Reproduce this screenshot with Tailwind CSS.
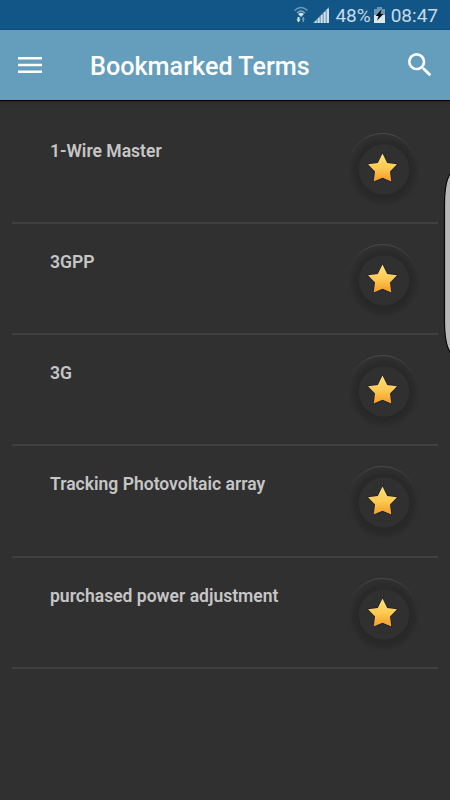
<!DOCTYPE html>
<html lang="en">
<head>
<meta charset="utf-8">
<title>Bookmarked Terms</title>
<script src="https://cdn.jsdelivr.net/npm/@tailwindcss/browser@4"></script>
</head>
<body class="relative h-[800px] w-[450px] overflow-hidden bg-[#303030] font-[Roboto,sans-serif]">
<svg class="absolute h-0 w-0">
  <defs>
    <linearGradient id="gold" x1="0" y1="0" x2="0" y2="1"><stop offset="0" stop-color="#ffe27a"/><stop offset=".5" stop-color="#fdca55"/><stop offset="1" stop-color="#f79a27"/></linearGradient>
    <linearGradient id="rim" x1="0" y1="0" x2="0" y2="1"><stop offset="0" stop-color="#4a4a4a"/><stop offset=".45" stop-color="#303030" stop-opacity="0"/></linearGradient>
    <radialGradient id="shade"><stop offset="0" stop-color="#262626"/><stop offset=".65" stop-color="#272727"/><stop offset=".82" stop-color="#2b2b2b"/><stop offset="1" stop-color="#303030" stop-opacity="0"/></radialGradient>
    <symbol id="star" viewBox="0 0 90 90">
      <circle cx="44" cy="46" r="38" fill="url(#shade)"/>
      <circle cx="42.5" cy="42.5" r="34" fill="none" stroke="url(#rim)"/>
      <circle cx="44" cy="44.5" r="25.2" fill="#303030"/>
      <path d="M42.500 28.500 L47.200 38 L57 39.300 L50 46.600 L51.300 56.500 L42.500 52.800 L33.700 56.500 L35 46.600 L28 39.300 L37.800 38 Z" fill="url(#gold)" stroke="#1b2030" stroke-width="1.400" stroke-linejoin="round" paint-order="stroke"/>
    </symbol>
  </defs>
</svg>

<div class="flex h-[30px] items-center justify-end border-b border-[#0d4c7c] bg-[#115687] pr-[12px] text-[#c9d9e8]">
  <svg class="mr-[5px] h-[17px] w-[14px]" viewBox="0 0 14 17" fill="none">
    <path d="M.5 4.500Q7-1.500 13.500 4.500" stroke="#6d98ba" stroke-width="1.500"/>
    <path d="M3 7Q7 3 11 7" stroke="#7fa6c4" stroke-width="1.500"/>
    <path d="M4 8Q7 5.500 10 8L7 11Z" fill="#d3e1ed"/>
    <path d="M3.500 11h2v2.500h1L4.500 16.500 2.500 13.500h1Z" fill="#d3e1ed"/>
    <path d="M8.500 16h1.500v-2.500h1L9.300 10.500 7.500 13.500h1Z" fill="#6f9abc"/>
  </svg>
  <svg class="mr-[6px] h-[16px] w-[16px]" viewBox="0 0 16 16"><path d="M0 16L16 0V16Z" fill="#86a8c3"/><path d="M2 14h1.500v2H2ZM5 11h1.500v5H5ZM8 8h1.500v8H8ZM11 5h1.500v11H11ZM14 2h2v14h-2Z" fill="#d2dfea"/></svg>
  <span class="mt-[1px] text-[19px] leading-none">48%</span>
  <svg class="ml-[3px] mr-[6px] h-[16px] w-[11px]" viewBox="0 0 11 16"><path d="M3 0h5v2h3v14H0V2h3Z" fill="#6f98b7"/><path d="M0 8h11v8H0Z" fill="#dce7f0"/><path d="M7.500 2.500L1.500 9h3L3 13.500 9.500 7h-3Z" fill="#050b12"/></svg>
  <span class="mt-[1px] text-[19px] leading-none">08:47</span>
</div>

<header class="flex h-[71px] items-center border-b border-black bg-[#659dbd] text-white">
  <svg class="ml-[18px] h-[16px] w-[24px]" viewBox="0 0 24 16" fill="white"><path d="M0 0h24v2.500H0ZM0 6.700h24v2.600H0ZM0 13.500h24V16H0Z"/></svg>
  <h1 class="mt-[3px] ml-[48px] flex-1 whitespace-nowrap text-[25.2px] leading-none font-medium">Bookmarked Terms</h1>
  <svg class="mr-[14px] h-[32px] w-[32px]" viewBox="0 0 24 24" fill="white"><path d="M15.500 14h-.79l-.28-.27A6.471 6.471 0 0 0 16 9.500 6.500 6.500 0 1 0 9.500 16c1.610 0 3.090-.59 4.230-1.570l.27.28v.79l5 4.990L20.490 19l-4.990-5zm-6 0C7.010 14 5 11.990 5 9.500S7.010 5 9.500 5 14 7.010 14 9.500 11.990 14 9.500 14z"/></svg>
</header>
<div class="h-[11.5px] bg-linear-to-b from-[#292929] to-[#303030] to-40%"></div>

<ul class="px-[12px] text-[17.55px] font-semibold text-[#c6c6c6]">
  <li class="flex h-[111.25px] items-start justify-between border-b-2 border-[#404040] pl-[38px] pr-[8px]"><span class="mt-[28px] leading-[20px]">1-Wire Master</span><svg class="mt-[12px] h-[90px] w-[90px]"><use href="#star"/></svg></li>
  <li class="flex h-[111.25px] items-start justify-between border-b-2 border-[#404040] pl-[38px] pr-[8px]"><span class="mt-[28px] leading-[20px]">3GPP</span><svg class="mt-[12px] h-[90px] w-[90px]"><use href="#star"/></svg></li>
  <li class="flex h-[111.25px] items-start justify-between border-b-2 border-[#404040] pl-[38px] pr-[8px]"><span class="mt-[28px] leading-[20px]">3G</span><svg class="mt-[12px] h-[90px] w-[90px]"><use href="#star"/></svg></li>
  <li class="flex h-[111.25px] items-start justify-between border-b-2 border-[#404040] pl-[38px] pr-[8px]"><span class="mt-[28px] leading-[20px]">Tracking Photovoltaic array</span><svg class="mt-[12px] h-[90px] w-[90px]"><use href="#star"/></svg></li>
  <li class="flex h-[111.25px] items-start justify-between border-b-2 border-[#404040] pl-[38px] pr-[8px]"><span class="mt-[28px] leading-[20px]">purchased power adjustment</span><svg class="mt-[12px] h-[90px] w-[90px]"><use href="#star"/></svg></li>
</ul>

<svg class="absolute top-[172px] right-0 h-[182px] w-[7px]" viewBox="0 0 7 182"><path d="M8 1Q1.500 8 1.500 34V148Q1.500 174 8 181Z" fill="#b9b9b9" stroke="#080808" stroke-width="1.200"/></svg>
</body>
</html>
